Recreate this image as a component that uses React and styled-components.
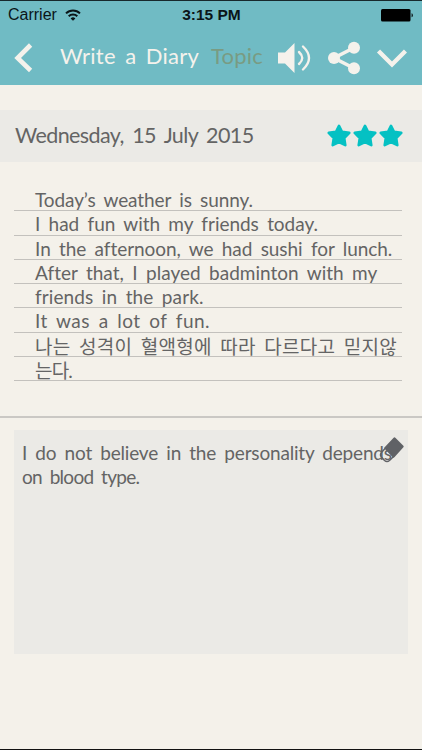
import React, { Component } from 'react';
import styled, { createGlobalStyle } from 'styled-components';

const diary = [
  { text: 'Today’s weather is sunny.', spacing: -0.09 },
  { text: 'I had fun with my friends today.', spacing: -0.03 },
  { text: 'In the afternoon, we had sushi for lunch.', spacing: -0.05 },
  { text: 'After that, I played badminton with my', spacing: 0.02 },
  { text: 'friends in the park.', spacing: 0.1 },
  { text: 'It was a lot of fun.', spacing: 0.43 },
  { text: '나는 성격이 혈액형에 따라 다르다고 믿지않', spacing: 0.24, leading: 28 },
  { text: '는다.', spacing: -0.8, leading: 28 },
];

const answer = [
  { text: 'I do not believe in the personality depends', spacing: -0.18 },
  { text: 'on blood type.', spacing: -0.7 },
];

const Star = () => (
  <svg width="26" height="26" viewBox="0 0 26 26">
    <path
      d="M13 2.8l3 6 7.3 1.1-5.1 5.1 1.1 7.2-6.3-3.2-6.3 3.2 1.1-7.200L2.700 9.900 10 8.800z"
      fill="#05c1c3"
      stroke="#05c1c3"
      strokeWidth="2.6"
      strokeLinejoin="round"
    />
  </svg>
);

class App extends Component {
  render() {
    return (
      <Screen>
        <GlobalStyle />
        <Header>
          <StatusBar>
            <Carrier>
              Carrier
              <svg width="16" height="12" viewBox="0 0 16 12" fill="none" stroke="#0b1518" strokeWidth="2">
                <path d="M1 4.4a10 10 0 0 1 14 0M3.7 7.2a6.1 6.1 0 0 1 8.6 0" />
                <path d="M8 11.8L5.6 9.4a3.4 3.4 0 0 1 4.8 0z" fill="#0b1518" stroke="none" />
              </svg>
            </Carrier>
            <Clock>3:15 PM</Clock>
            <Battery>
              <svg width="33" height="13" viewBox="0 0 33 13" fill="#000">
                <rect x="0" y="0" width="29.5" height="12.5" rx="1.5" />
                <path d="M30.6 4.2c1.6.5 1.6 3.6 0 4.1z" />
              </svg>
            </Battery>
          </StatusBar>
          <NavBar>
            <Back>
              <svg width="20" height="30" viewBox="0 0 20 30" fill="none" stroke="#f5f2ec" strokeWidth="4.6">
                <path d="M17.6 2L4.600 15l13 12.500" />
              </svg>
            </Back>
            <Title>
              <Label spacing={0.24}>Write a Diary</Label>
            </Title>
            <Topic>
              <Label spacing={0.2}>Topic</Label>
            </Topic>
            <Actions>
              <svg width="35" height="32" viewBox="0 0 35 32" fill="#f5f2ec">
                <path d="M1 10.5h7L17.5 1v30L8 21.5H1z" />
                <path d="M22 10q6.5 6 0 12M26 4.5q12 11.5 0 23" fill="none" stroke="#f5f2ec" strokeWidth="2.4" strokeLinecap="round" />
              </svg>
              <svg width="34" height="34" viewBox="0 0 34 34" fill="#f5f2ec">
                <path d="M27.5 6.5L7 17l20.500 10.500" fill="none" stroke="#f5f2ec" strokeWidth="3.6" />
                <circle cx="27" cy="6.7" r="6" />
                <circle cx="7" cy="17" r="6" />
                <circle cx="27" cy="27.3" r="6" />
              </svg>
              <svg width="31" height="20" viewBox="0 0 31 20" fill="none" stroke="#f5f2ec" strokeWidth="4.4">
                <path d="M2.5 3L16 16.500 29.500 3" />
              </svg>
            </Actions>
          </NavBar>
        </Header>

        <DateBar>
          <DateText>
            <Label spacing={-0.6}>Wednesday, 15 July 2015</Label>
          </DateText>
          <Stars>
            <Star />
            <Star />
            <Star />
          </Stars>
        </DateBar>

        <Page>
          {diary.map(line => (
            <Line key={line.text} leading={line.leading}>
              <Label spacing={line.spacing}>{line.text}</Label>
            </Line>
          ))}
        </Page>

        <Answer>
          {answer.map(line => (
            <AnswerLine key={line.text}>
              <Label spacing={line.spacing}>{line.text}</Label>
            </AnswerLine>
          ))}
          <Eraser width="26" height="28" viewBox="0 0 26 28">
            <path d="M15.5 2.5L23.5 10.500 14.500 20.500 6.500 12z" fill="#606266" stroke="#606266" strokeWidth="2.4" strokeLinejoin="round" />
            <path d="M6.5 12L2.500 16.500q-2 2.500 0 4.500l3 3.500q2.500 2 5 0l4.500-4.500" fill="none" stroke="#606266" strokeWidth="1.5" />
          </Eraser>
        </Answer>
      </Screen>
    );
  }
}

const GlobalStyle = createGlobalStyle`
  body {
    margin: 0;
    background: #f4f1ea;
  }
  * {
    box-sizing: border-box;
  }
`;

const Screen = styled.main`
  height: 750px;
  border-bottom: 1px solid #111;
  overflow: hidden;
  background: #f4f1ea;
  color: #646464;
  font-family: Lato, "Noto Sans CJK KR", sans-serif;
`;

const Label = styled.span.withConfig({ shouldForwardProp: prop => prop !== 'spacing' })`
  letter-spacing: ${props => props.spacing}px;
  word-spacing: 3.5px;
  white-space: nowrap;
`;

const Header = styled.header`
  height: 85px;
  border-top: 1px solid #17292d;
  background: #70bbc4;
`;

const StatusBar = styled.div`
  display: grid;
  grid-template-columns: 1fr auto 1fr;
  align-items: center;
  height: 28px;
  padding: 0 8px;
  color: #0b1518;
  font: 16px/28px "Liberation Sans", Arial, sans-serif;
`;

const Carrier = styled.div`
  display: flex;
  align-items: center;
  gap: 8px;
`;

const Clock = styled.div`
  padding-left: 1px;
  font-size: 15.5px;
  font-weight: bold;
`;

const Battery = styled.div`
  display: flex;
  justify-content: flex-end;
`;

const NavBar = styled.nav`
  display: flex;
  align-items: center;
  height: 57px;
  padding: 1px 13px 0;
  color: #f5f2ec;
  font-size: 22px;
`;

const Back = styled.div`
  width: 47px;
  svg {
    display: block;
  }
`;

const Title = styled.div`
  width: 151px;
  padding-bottom: 5px;
`;

const Topic = styled.div`
  width: 66px;
  padding-bottom: 5px;
  color: #799b83;
`;

const Actions = styled.div`
  display: flex;
  align-items: center;
  gap: 15px;
`;

const DateBar = styled.div`
  display: flex;
  align-items: center;
  justify-content: space-between;
  height: 52px;
  margin-top: 25px;
  padding: 0 18px 0 15px;
  background: #ebeae6;
`;

const DateText = styled.div`
  padding-bottom: 3px;
  font-size: 21.5px;
`;

const Stars = styled.div`
  display: flex;
`;

const Page = styled.section`
  height: 256px;
  padding: 25px 20px 0 14px;
  border-bottom: 2px solid #cac8c4;
`;

const Line = styled.div.withConfig({ shouldForwardProp: prop => prop !== 'leading' })`
  height: 24.3px;
  padding-left: 21px;
  border-bottom: 1px solid #c3c1bd;
  font-size: 19px;
  line-height: ${props => props.leading || 25}px;
`;

const Answer = styled.section`
  position: relative;
  height: 224px;
  margin: 12px 14px 0;
  padding: 10px 8px;
  background: #ebeae6;
`;

const AnswerLine = styled.div`
  height: 24.3px;
  font-size: 19px;
  line-height: 25px;
`;

const Eraser = styled.svg`
  position: absolute;
  top: 6px;
  right: 3px;
`;

export default App;
